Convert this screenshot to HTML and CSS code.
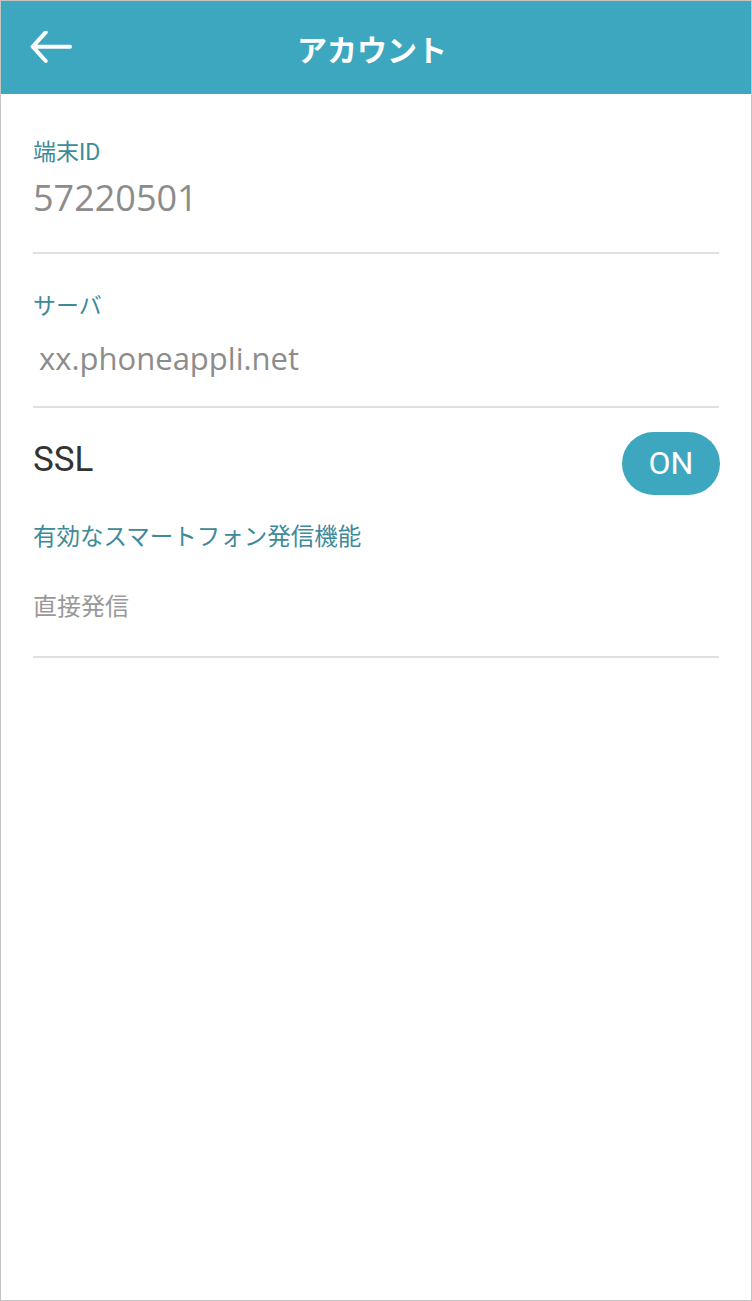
FILE: index.html
```html
<!DOCTYPE html>
<html lang="ja">
<head>
<meta charset="utf-8">
<title>アカウント</title>
<link rel="stylesheet" href="styles.css">
</head>
<body>
<div class="app">
  <header class="topbar">
    <div class="back">
      <svg width="42" height="34" viewBox="0 0 42 34" aria-hidden="true">
        <path d="M40 15.7 H2.7 M15.7 1.3 L2.7 15.7 L15.7 30" fill="none" stroke="#fff" stroke-width="4" stroke-linecap="round" stroke-linejoin="round"/>
      </svg>
    </div>
    <h1 class="title">アカウント</h1>
    <div class="spacer"></div>
  </header>
  <main class="content">
    <section class="field field-id">
      <div class="label">端末ID</div>
      <div class="value value-id">57220501</div>
    </section>
    <section class="field field-server">
      <div class="label">サーバ</div>
      <div class="value value-server">xx.phoneappli.net</div>
    </section>
    <section class="field field-ssl">
      <div class="ssl-row">
        <div class="ssl-text">SSL</div>
        <div class="toggle">ON</div>
      </div>
      <div class="label label-func">有効なスマートフォン発信機能</div>
      <div class="sub">直接発信</div>
    </section>
  </main>
</div>
</body>
</html>
```

FILE: styles.css
```css
* { box-sizing: border-box; }
html, body { margin: 0; padding: 0; background: #fff; }
body {
  font-family: Roboto, "Noto Sans CJK JP", sans-serif;
}
.app {
  width: 752px;
  height: 1301px;
  border: 1px solid #c4c4c4;
  background: #fff;
  overflow: hidden;
}
.topbar {
  height: 93px;
  background: #3ea7c0;
  display: grid;
  grid-template-columns: 1fr auto 1fr;
  align-items: center;
  padding-right: 8px;
}
.back {
  padding-left: 29px;
  display: flex;
  align-items: center;
  height: 100%;
  padding-top: 1px;
}
.back svg { display: block; }
.title {
  margin: 0;
  color: #fff;
  font-family: "Noto Sans CJK JP", sans-serif;
  font-size: 30px;
  font-weight: 700;
  line-height: 40px;
  letter-spacing: 0;
}
.content {
  padding: 0 32px;
}
.field {
  border-bottom: 2px solid #e0e0e0;
}
.label {
  color: #3d8a9b;
  font-size: 23px;
  line-height: 32px;
}
.value {
  color: #8c8c8c;
  font-family: "Open Sans", "Noto Sans CJK JP", sans-serif;
}
.field-id { padding-top: 43px; padding-bottom: 32px; }
.value-id {
  margin-top: 7px;
  font-size: 36px;
  line-height: 44px;
}
.field-server { padding-top: 37px; padding-bottom: 28px; }
.value-server {
  margin-top: 15px;
  padding-left: 6px;
  font-size: 31px;
  line-height: 40px;
}
.field-ssl { padding-top: 24px; padding-bottom: 33px; }
.ssl-row {
  display: flex;
  justify-content: space-between;
  align-items: flex-start;
}
.ssl-text {
  margin-top: 6px;
  color: #333;
  font-size: 35px;
  line-height: 44px;
}
.toggle {
  width: 98px;
  height: 63px;
  border-radius: 32px;
  background: #3ea7c0;
  color: #fff;
  font-size: 32px;
  line-height: 63px;
  text-align: center;
  margin-right: -1px;
}
.label-func {
  margin-top: 26px;
  font-size: 23.5px;
}
.sub {
  margin-top: 38px;
  color: #999;
  font-size: 24px;
  line-height: 32px;
}
```
